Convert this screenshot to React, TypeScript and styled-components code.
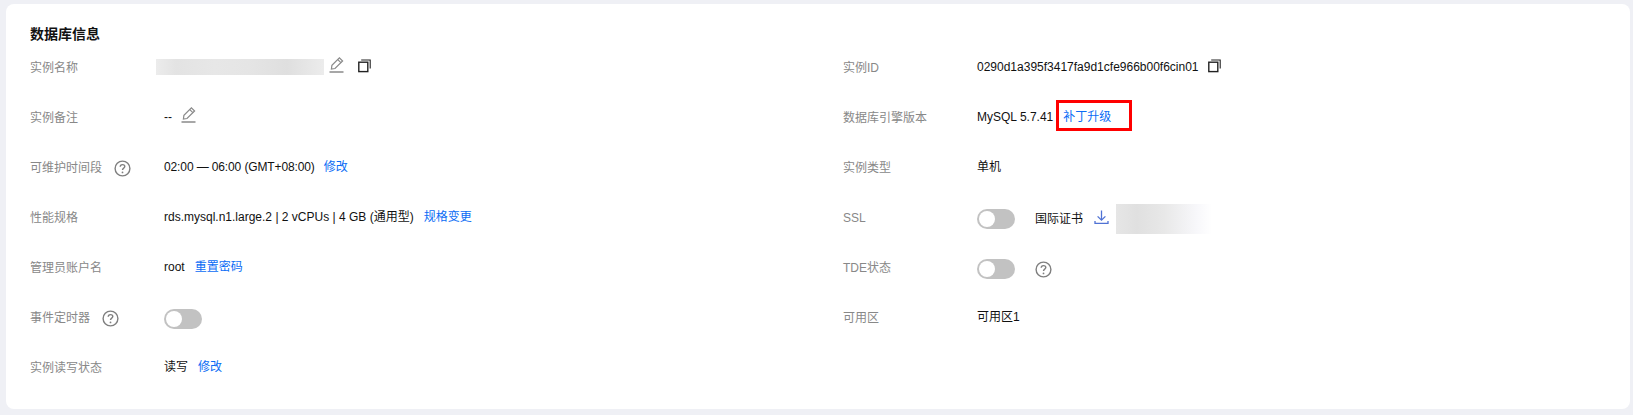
import React from "react";
import styled, { createGlobalStyle } from "styled-components";

const Global = createGlobalStyle`
  html, body { margin: 0; padding: 0; background: #eff0f5; }
  body { font-family: "Liberation Sans", "Noto Sans CJK SC", Arial, sans-serif; font-size: 12px; color: #111; }
`;

const Page = styled.div`
  width: 1633px;
  height: 415px;
  padding: 4px 3px 6px 6px;
  box-sizing: border-box;
`;

const Card = styled.section`
  height: 405px;
  background: #fff;
  border-radius: 8px;
  padding: 22px 0 0 24px;
  box-sizing: border-box;
`;

const Title = styled.h2`
  margin: 0;
  font-size: 14px;
  line-height: 16px;
  font-weight: 700;
  color: #111;
`;

const Columns = styled.div`
  display: grid;
  grid-template-columns: 813px 1fr;
`;

const Column = styled.div`
  display: flex;
  flex-direction: column;
`;

const Row = styled.div`
  display: flex;
  align-items: center;
  height: 50px;
`;

const Label = styled.div`
  width: 126px;
  flex: none;
  display: flex;
  align-items: center;
  color: #888;
  line-height: 20px;
  position: relative;
  top: 1px;
`;

const Value = styled.div<{ $flush?: boolean; $drop?: boolean }>`
  display: flex;
  align-items: center;
  height: 20px;
  margin-top: ${(p) => (p.$drop ? 4 : 0)}px;
  padding-left: ${(p) => (p.$flush ? 0 : 8)}px;
  line-height: 20px;
  color: #111;
  white-space: nowrap;
`;

const Time = styled.span`
  letter-spacing: -0.12px;
`;

const Link = styled.a<{ $gap?: number }>`
  color: #0a6cf5;
  margin-left: ${(p) => p.$gap ?? 10}px;
  cursor: pointer;
`;

const Boxed = styled(Link)`
  position: relative;
  &::after {
    content: "";
    position: absolute;
    left: -7px;
    right: -21px;
    top: -7px;
    bottom: -4px;
    border: 3px solid #f00;
  }
`;

const Mask = styled.div<{ $w: number; $h: number; $fade?: boolean; $left?: number }>`
  flex: none;
  width: ${(p) => p.$w}px;
  height: ${(p) => p.$h}px;
  margin-left: ${(p) => p.$left ?? 0}px;
  background: ${(p) =>
    p.$fade
      ? "linear-gradient(90deg, #e6e6e6 0%, #e0e0e0 22%, #e8e8e8 50%, #f8f8fb 85%, #ffffff 100%)"
      : "linear-gradient(90deg, #ececec 0%, #e3e3e3 12%, #e7e7e7 35%, #e5e5e5 55%, #dfdfdf 78%, #ececec 100%)"};
`;

const Toggle = styled.span`
  flex: none;
  width: 38px;
  height: 20px;
  border-radius: 10px;
  background: #c2c2c2;
  display: flex;
  align-items: center;
  padding-left: 2px;
  box-sizing: border-box;
  &::before {
    content: "";
    width: 16px;
    height: 16px;
    border-radius: 50%;
    background: #fff;
  }
`;

const Icon = styled.svg<{ $left?: number; $up?: number }>`
  flex: none;
  display: block;
  margin-left: ${(p) => p.$left ?? 0}px;
  position: relative;
  top: ${(p) => -(p.$up ?? 0)}px;
`;

const Pencil = ({ left }: { left: number }) => (
  <Icon $left={left} $up={2} width="15" height="16" viewBox="0 0 15 16" fill="none" stroke="#8a8a8a" strokeWidth="1.2">
    <path d="M2.4 12 2.9 8.4 10.4 0.9 13.6 4 6 11.5 2.4 12Z" />
    <path d="M8.8 2.6 11.9 5.7" />
    <path d="M0.5 15H14.5" strokeWidth="1.5" />
  </Icon>
);

const Copy = ({ left }: { left: number }) => (
  <Icon $left={left} $up={1} width="13" height="14" viewBox="0 0 13 14" fill="none" stroke="#222" strokeWidth="1.4">
    <rect x="0.8" y="3.2" width="9" height="9.4" />
    <path d="M3.2 1H12.2V9.6" strokeWidth="1.1" />
  </Icon>
);

const Help = ({ left }: { left: number }) => (
  <Icon $left={left} width="17" height="17" viewBox="0 0 17 17" fill="none" stroke="#7f7f7f">
    <circle cx="8.5" cy="8.5" r="7.4" strokeWidth="1.4" />
    <path d="M6.2 6.8C6.2 5.4 7.2 4.6 8.5 4.6 9.9 4.6 10.8 5.5 10.8 6.6 10.8 8.2 8.5 8.2 8.5 10" strokeWidth="1.4" />
    <circle cx="8.5" cy="12.4" r="0.9" fill="#7f7f7f" stroke="none" />
  </Icon>
);

const Download = () => (
  <Icon $left={11} $up={2} width="15" height="15" viewBox="0 0 15 15" fill="none" stroke="#4f72d4" strokeWidth="1.3">
    <path d="M7.5 0.5V10M3.6 6.4 7.5 10.2 11.4 6.4" />
    <path d="M1 11V13.4H14V11" />
  </Icon>
);

const Spaced = styled.span`
  margin-left: 20px;
`;

export default function App() {
  return (
    <Page>
      <Global />
      <Card>
        <Title>数据库信息</Title>
        <Columns>
          <Column>
            <Row>
              <Label>实例名称</Label>
              <Value $flush>
                <Mask $w={168} $h={16} />
                <Pencil left={5} />
                <Copy left={14} />
              </Value>
            </Row>
            <Row>
              <Label>实例备注</Label>
              <Value>
                --
                <Pencil left={9} />
              </Value>
            </Row>
            <Row>
              <Label>
                可维护时间段
                <Help left={12} />
              </Label>
              <Value>
                <Time>02:00 — 06:00 (GMT+08:00)</Time>
                <Link $gap={9}>修改</Link>
              </Value>
            </Row>
            <Row>
              <Label>性能规格</Label>
              <Value>
                rds.mysql.n1.large.2 | 2 vCPUs | 4 GB (通用型)
                <Link>规格变更</Link>
              </Value>
            </Row>
            <Row>
              <Label>管理员账户名</Label>
              <Value>
                root
                <Link>重置密码</Link>
              </Value>
            </Row>
            <Row>
              <Label>
                事件定时器
                <Help left={12} />
              </Label>
              <Value $drop>
                <Toggle />
              </Value>
            </Row>
            <Row>
              <Label>实例读写状态</Label>
              <Value>
                读写
                <Link>修改</Link>
              </Value>
            </Row>
          </Column>
          <Column>
            <Row>
              <Label>实例ID</Label>
              <Value>
                0290d1a395f3417fa9d1cfe966b00f6cin01
                <Copy left={9} />
              </Value>
            </Row>
            <Row>
              <Label>数据库引擎版本</Label>
              <Value>
                MySQL 5.7.41
                <Boxed>补丁升级</Boxed>
              </Value>
            </Row>
            <Row>
              <Label>实例类型</Label>
              <Value>单机</Value>
            </Row>
            <Row>
              <Label>SSL</Label>
              <Value $drop>
                <Toggle />
                <Spaced>国际证书</Spaced>
                <Download />
                <Mask $w={96} $h={30} $fade $left={7} />
              </Value>
            </Row>
            <Row>
              <Label>TDE状态</Label>
              <Value $drop>
                <Toggle />
                <Help left={20} />
              </Value>
            </Row>
            <Row>
              <Label>可用区</Label>
              <Value>可用区1</Value>
            </Row>
          </Column>
        </Columns>
      </Card>
    </Page>
  );
}
